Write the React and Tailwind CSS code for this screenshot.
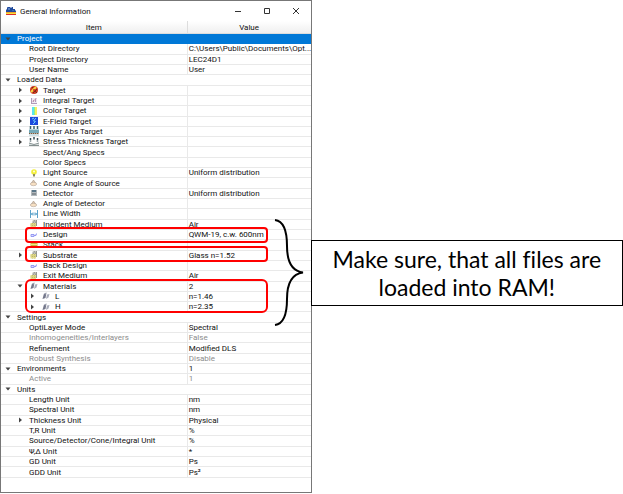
import React from "react";

const ICONS = {
  none: null,
  target: (
    <>
      <circle cx="6" cy="6" r="4" fill="#cf3a22" />
      <path d="M3 8l5-5" stroke="#f3dd45" strokeWidth="2" />
      <path d="M4 3l1 1M7 7l2 2M5 9l4-4" stroke="#7a2a12" strokeWidth="1" />
      <circle cx="6" cy="6" r="1" fill="#d8221c" />
    </>
  ),
  integral: (
    <>
      <rect x="3" y="3" width="6" height="6" fill="#efe8f3" />
      <path d="M3.500 3v6M3 8.500h6M5.500 7V5M7.500 7V3.500" stroke="#b09ab8" fill="none" />
      <path d="M4.500 6.500l4-3" stroke="#c98a9a" strokeWidth="0.700" fill="none" />
    </>
  ),
  color: (
    <>
      <rect x="4" y="2" width="2" height="8" fill="#58e4f2" />
      <rect x="6" y="2" width="1" height="8" fill="#8af08c" />
      <rect x="7" y="2" width="2" height="8" fill="#f4f060" />
    </>
  ),
  efield: (
    <>
      <rect x="2" y="2" width="8" height="8" fill="#1d49dc" />
      <path d="M4 4l2-1M8 3L5.500 6l2 .5L5 9" stroke="#6fd0ff" fill="none" />
    </>
  ),
  layer: (
    <>
      <path d="M2.500 1v3M6 1v3M9.500 1v3" stroke="#37606c" strokeWidth="1.500" />
      <rect x="1" y="4.500" width="10" height="3.500" fill="#74a9b8" />
      <path d="M1 8.500h10" stroke="#7a5a3c" strokeDasharray="1.500 0.500" />
      <path d="M1 10h10" stroke="#9fc4cf" />
    </>
  ),
  stress: (
    <>
      <path d="M2.500 2v3.500M6 1v3M9.500 2v3.500" stroke="#344c55" strokeWidth="1.500" strokeDasharray="2.500 0.500" />
      <path d="M1 7q5 3 10 0v2.500q-5 1.500-10 0z" fill="#d5dcdc" />
      <path d="M1 7q5 3 10 0M1 9.500h10" stroke="#6f7c7c" strokeWidth="0.800" fill="none" />
    </>
  ),
  bulb: (
    <>
      <circle cx="6" cy="5" r="2.800" fill="#f2ee3a" />
      <circle cx="6" cy="4.500" r="1" fill="#fffde0" />
      <rect x="5" y="7" width="2" height="2.500" fill="#8f8c62" />
    </>
  ),
  cone: (
    <>
      <path d="M5.500 3L3 6.500h5z" fill="#d9c6ae" stroke="#a99684" strokeWidth="0.600" />
      <ellipse cx="5.500" cy="7" rx="3.200" ry="1.700" fill="#f6dfc2" stroke="#b3a598" strokeWidth="0.600" />
    </>
  ),
  detector: (
    <>
      <rect x="3" y="3" width="6" height="6" fill="#b3b9bd" />
      <rect x="4" y="3" width="4" height="2" fill="#5a7688" />
      <rect x="4" y="6" width="4" height="2" fill="#858d92" />
    </>
  ),
  width: (
    <path d="M2.500 2v8M9.500 2v8M3 6h6M5 4.500L3.500 6 5 7.500M7 4.500L8.500 6 7 7.500" stroke="#4a97c4" strokeWidth="0.900" fill="none" />
  ),
  medium: (
    <>
      <path d="M4 5l1-3h4v6H4z" fill="#95978f" />
      <path d="M5.500 2L4.500 5M7.500 2L6.500 5" stroke="#e6e6e0" strokeWidth="0.700" />
      <rect x="2.500" y="5" width="5.500" height="4.500" fill="#e3dc8a" />
      <path d="M2.500 7h5.500M4.500 5v4.500M6.500 5v4.500" stroke="#a8a25e" strokeWidth="0.600" strokeDasharray="1 1" />
    </>
  ),
  design: (
    <>
      <path d="M3 5.500h3v2H3zM6 6.500h2V5h1" stroke="#8d92f2" strokeWidth="0.900" fill="#dcdcff" />
    </>
  ),
  stack: (
    <>
      <path d="M2.500 3h3l1 1h3v5h-7z" fill="#c8b63c" />
      <path d="M2.500 5.500h7" stroke="#efe48e" />
    </>
  ),
  materials: (
    <>
      <path d="M2.500 9L4 3.500 6.500 2.500 5.500 8z" fill="#73778a" />
      <path d="M6 9l1-4.500 2.500-.5-1 3.500z" fill="#a9acba" />
      <path d="M4 3.500L6.500 4" stroke="#d7d9e0" strokeWidth="0.600" />
    </>
  ),
};

const rows = [
  { label: "Project", level: 0, arrow: "down", value: "", selected: true },
  { label: "Root Directory", level: 1, value: "C:\\Users\\Public\\Documents\\Opt..." },
  { label: "Project Directory", level: 1, value: "LEC24D1" },
  { label: "User Name", level: 1, value: "User" },
  { label: "Loaded Data", level: 0, arrow: "down", span: true },
  { label: "Target", level: 1, arrow: "right", icon: "target" },
  { label: "Integral Target", level: 1, arrow: "right", icon: "integral" },
  { label: "Color Target", level: 1, arrow: "right", icon: "color" },
  { label: "E-Field Target", level: 1, arrow: "right", icon: "efield" },
  { label: "Layer Abs Target", level: 1, arrow: "right", icon: "layer" },
  { label: "Stress Thickness Target", level: 1, arrow: "right", icon: "stress" },
  { label: "Spect/Ang Specs", level: 1, icon: "none" },
  { label: "Color Specs", level: 1, icon: "none" },
  { label: "Light Source", level: 1, icon: "bulb", value: "Uniform distribution" },
  { label: "Cone Angle of Source", level: 1, icon: "cone" },
  { label: "Detector", level: 1, icon: "detector", value: "Uniform distribution" },
  { label: "Angle of Detector", level: 1, icon: "cone" },
  { label: "Line Width", level: 1, icon: "width" },
  { label: "Incident Medium", level: 1, icon: "medium", value: "Air" },
  { label: "Design", level: 1, icon: "design", value: "QWM-19, c.w. 600nm" },
  { label: "Stack", level: 1, icon: "stack" },
  { label: "Substrate", level: 1, arrow: "right", icon: "medium", value: "Glass n=1.52" },
  { label: "Back Design", level: 1, icon: "design" },
  { label: "Exit Medium", level: 1, icon: "medium", value: "Air" },
  { label: "Materials", level: 1, arrow: "down", icon: "materials", value: "2" },
  { label: "L", level: 2, arrow: "right", icon: "materials", value: "n=1.46" },
  { label: "H", level: 2, arrow: "right", icon: "materials", value: "n=2.35" },
  { label: "Settings", level: 0, arrow: "down", span: true },
  { label: "OptiLayer Mode", level: 1, value: "Spectral" },
  { label: "Inhomogeneities/Interlayers", level: 1, value: "False", muted: true },
  { label: "Refinement", level: 1, value: "Modified DLS" },
  { label: "Robust Synthesis", level: 1, value: "Disable", muted: true },
  { label: "Environments", level: 0, arrow: "down", value: "1" },
  { label: "Active", level: 1, value: "1", muted: true },
  { label: "Units", level: 0, arrow: "down", span: true },
  { label: "Length Unit", level: 1, value: "nm" },
  { label: "Spectral Unit", level: 1, value: "nm" },
  { label: "Thickness Unit", level: 1, arrow: "right", value: "Physical" },
  { label: "T,R Unit", level: 1, value: "%" },
  { label: "Source/Detector/Cone/Integral Unit", level: 1, value: "%" },
  { label: "Ψ,Δ Unit", level: 1, value: "*" },
  { label: "GD Unit", level: 1, value: "Ps" },
  { label: "GDD Unit", level: 1, value: "Ps²" },
];

const indent = ["pl-1", "pl-4", "pl-7"];

function Arrow({ dir }) {
  return (
    <svg viewBox="0 0 6 6" className="size-[6px] shrink-0" aria-hidden="true">
      {dir === "down" && <path d="M0.500 1.500h5L3 4.500z" fill="#444" />}
      {dir === "right" && <path d="M2 0.500v5L5 3z" fill="#444" />}
    </svg>
  );
}

function Row({ row }) {
  const line = row.selected ? "border-[#0078d7]" : "border-[#e9e9e9]";
  const tone = row.selected
    ? "bg-[#0078d7] text-white"
    : row.muted
      ? "text-[#8c8c8c]"
      : "text-[#111]";
  return (
    <tr className={tone}>
      <td colSpan={row.span ? 2 : 1} className={`border-b p-0 ${line}`}>
        <div className={`flex h-[9px] items-center whitespace-nowrap ${indent[row.level]}`}>
          <Arrow dir={row.arrow} />
          {row.icon ? (
            <svg viewBox="0 0 12 12" className="mr-[3px] ml-[5px] size-[12px] shrink-0" aria-hidden="true">
              {ICONS[row.icon]}
            </svg>
          ) : (
            <span className="w-[6px] shrink-0" />
          )}
          <span>{row.label}</span>
        </div>
      </td>
      {!row.span && (
        <td className={`border-b border-l p-0 pl-px ${line}`}>
          <div className="flex h-[9px] items-center whitespace-nowrap">{row.value}</div>
        </td>
      )}
    </tr>
  );
}

function TitleBar() {
  return (
    <header className="flex h-[20px] items-center pl-[5px]">
      <svg viewBox="0 0 10 10" className="size-[10px]" aria-hidden="true">
        <path d="M0 6V4l1-1V1.500L2 1h2l1 1 1-1h1v2h2v1l1 1v1z" fill="#1f4a9c" />
        <path d="M2.500 2.500h1v1h-1zM6.500 4.500h1" stroke="#8fb4ec" strokeWidth="0.600" fill="none" />
        <rect y="6" width="10" height="1" fill="#f0a02c" />
        <rect y="7" width="10" height="1" fill="#f4e23a" />
        <rect y="8" width="10" height="1" fill="#dc2f2a" />
      </svg>
      <h1 className="ml-1 grow">General Information</h1>
      <button aria-label="Minimize" className="flex w-[29px] justify-center">
        <svg viewBox="0 0 8 8" className="size-[8px]"><path d="M1 4.500h6" stroke="#333" /></svg>
      </button>
      <button aria-label="Maximize" className="flex w-[29px] justify-center">
        <svg viewBox="0 0 8 8" className="size-[8px]"><path d="M1.500 1.500h5v5h-5z" stroke="#333" fill="none" /></svg>
      </button>
      <button aria-label="Close" className="flex w-[29px] justify-center">
        <svg viewBox="0 0 8 8" className="size-[8px]"><path d="M1 1l6 6M7 1L1 7" stroke="#333" /></svg>
      </button>
    </header>
  );
}

export default function App() {
  return (
    <main className="flex items-start bg-white text-[8px] leading-[9px] text-[#111]">
      <section className="relative w-1/2 shrink-0 border border-[#777] pb-[14px] font-[Roboto,'Noto_Sans',sans-serif]">
        <TitleBar />
        <table className="h-[457px] w-full table-fixed border-separate border-spacing-0">
          <colgroup>
            <col className="w-3/5" />
            <col />
          </colgroup>
          <thead>
            <tr className="bg-gradient-to-b from-white to-[#eeeeee]">
              <th className="h-[13px] border-b border-[#ddd] p-0 font-normal">Item</th>
              <th className="h-[13px] border-b border-l border-[#ddd] p-0 font-normal">Value</th>
            </tr>
          </thead>
          <tbody>
            {rows.map((row) => (
              <Row key={row.label} row={row} />
            ))}
          </tbody>
        </table>
        <div className="absolute top-[226px] left-[24px] h-[16px] w-[243px] rounded-[4px] border-2 border-[#f00]" />
        <div className="absolute top-[245px] left-[24px] h-[16px] w-[243px] rounded-[4px] border-2 border-[#f00]" />
        <div className="absolute top-[278px] left-[24px] h-[34px] w-[243px] rounded-[6px] border-2 border-[#f00]" />
        <svg viewBox="0 0 30 108" className="absolute top-[218px] left-[273px] h-[108px] w-[30px]" aria-hidden="true">
          <path d="M1 1C9 2 13 12 13 27C13 42 17 52 29 53.500C17 55 13 65 13 80C13 95 9 105 1 106" stroke="#000" strokeWidth="2" fill="none" />
        </svg>
      </section>
      <p className="relative mt-[240px] -ml-px grow border border-black px-4 py-[4px] text-center font-[Lato,sans-serif] text-[23px] leading-[28px] text-black [font-variant-ligatures:none]">
        Make sure, that all files are loaded into RAM!
      </p>
    </main>
  );
}
